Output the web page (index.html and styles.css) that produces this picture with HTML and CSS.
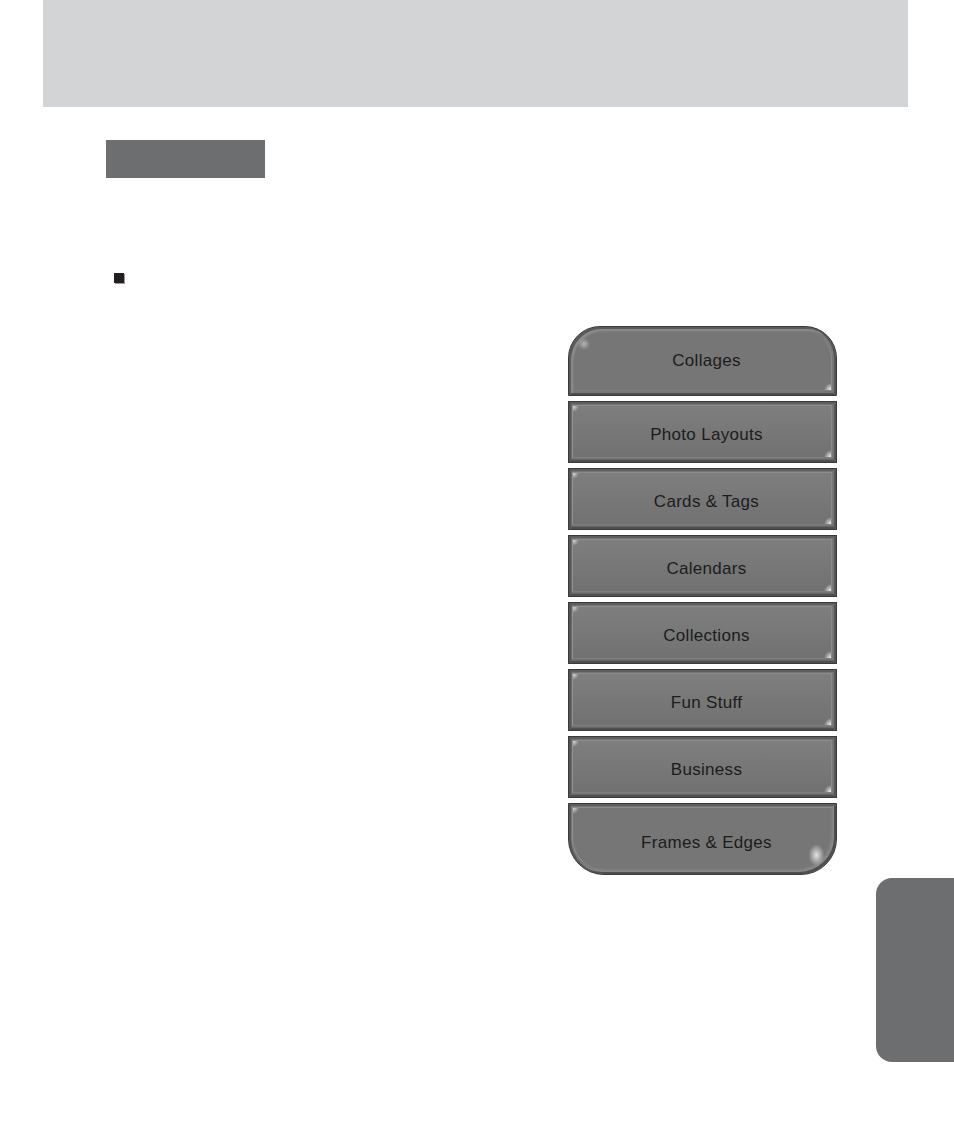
FILE: index.html
```html
<!DOCTYPE html>
<html lang="en">
<head>
<meta charset="utf-8">
<title>Projects</title>
<link rel="stylesheet" href="styles.css">
</head>
<body>
<div class="top-band"></div>
<div class="section-tab"></div>
<div class="bullet"></div>
<nav class="menu">
  <div class="btn btn-first"><span>Collages</span></div>
  <div class="btn"><span>Photo Layouts</span></div>
  <div class="btn"><span>Cards &amp; Tags</span></div>
  <div class="btn"><span>Calendars</span></div>
  <div class="btn"><span>Collections</span></div>
  <div class="btn"><span>Fun Stuff</span></div>
  <div class="btn"><span>Business</span></div>
  <div class="btn btn-last"><span>Frames &amp; Edges</span></div>
</nav>
<div class="side-tab"></div>
</body>
</html>
```
FILE: styles.css
```css
html, body {
  margin: 0;
  padding: 0;
  background: #ffffff;
}
body {
  width: 954px;
  height: 1145px;
  overflow: hidden;
  font-family: "Liberation Sans", Arial, sans-serif;
}
.top-band {
  margin-left: 43px;
  width: 865px;
  height: 107px;
  background: #d3d4d6;
}
.section-tab {
  margin-top: 33px;
  margin-left: 106px;
  width: 159px;
  height: 38px;
  background: #6d6e70;
}
.bullet {
  margin-top: 95px;
  margin-left: 114px;
  width: 10px;
  height: 10px;
  background: #231f20;
  box-shadow: 1px 1px 0 #9a9a9a;
}
.menu {
  margin-top: 43px;
  margin-left: 568px;
  width: 269px;
  display: flex;
  flex-direction: column;
  gap: 5px;
}
.btn {
  position: relative;
  box-sizing: border-box;
  height: 62px;
  border: 1px solid #3a3a3a;
  background: #767676;
  box-shadow:
    inset 2px 0 0 #565656,
    inset 0 2px 0 #5e5e5e,
    inset -2px 0 0 #555555,
    inset 0 -2px 0 #4e4e4e,
    inset 3px 0 1px #6a6a6a,
    inset 0 -3px 1px #666666;
  display: flex;
  align-items: center;
  justify-content: center;
  padding-left: 8px;
  padding-top: 5px;
  color: #1c1c1c;
  font-size: 17px;
  letter-spacing: 0.3px;
}
.btn::before {
  content: "";
  position: absolute;
  left: 3px;
  top: 3px;
  right: 4px;
  bottom: 4px;
  border-top: 1px solid #8c8c8c;
  border-left: 1px solid #939393;
  border-right: 1px solid #8a8a8a;
  border-bottom: 1px solid #7e7e7e;
  background:
    radial-gradient(circle at 0 0, rgba(255,255,255,0.75) 0, rgba(255,255,255,0) 6px) no-repeat,
    radial-gradient(circle at 100% 100%, rgba(255,255,255,0.95) 0, rgba(255,255,255,0) 7px) no-repeat,
    linear-gradient(to bottom, rgba(255,255,255,0.06), rgba(0,0,0,0.04));
  pointer-events: none;
}
.btn span {
  position: relative;
}
.btn-first {
  height: 70px;
  padding-top: 0;
  border-radius: 32px 32px 0 0;
  box-shadow:
    inset 2px 2px 0 #5a5a5a,
    inset -2px 0 0 #555555,
    inset 0 -2px 0 #4e4e4e,
    inset 4px 4px 2px #8d8d8d;
}
.btn-first::before {
  border-top: none;
  border-left: none;
  border-radius: 28px 28px 0 0;
  background:
    radial-gradient(circle at 100% 100%, rgba(255,255,255,0.95) 0, rgba(255,255,255,0) 7px) no-repeat,
    radial-gradient(circle at 12px 14px, rgba(255,255,255,0.45) 0, rgba(255,255,255,0) 6px) no-repeat;
}
.btn-last {
  height: 72px;
  padding-top: 7px;
  border-radius: 0 0 36px 36px;
  box-shadow:
    inset 2px 0 0 #565656,
    inset 0 2px 0 #5e5e5e,
    inset -2px -2px 0 #4e4e4e,
    inset -4px -4px 3px #8a8a8a;
}
.btn-last::before {
  border-right: none;
  border-bottom: none;
  border-radius: 0 0 32px 32px;
  background:
    radial-gradient(circle at 0 0, rgba(255,255,255,0.75) 0, rgba(255,255,255,0) 6px) no-repeat,
    radial-gradient(8px 11px at 94% 76%, rgba(255,255,255,0.8) 0, rgba(255,255,255,0) 100%) no-repeat;
}
.side-tab {
  margin-top: 3px;
  margin-left: 876px;
  width: 78px;
  height: 184px;
  background: #6d6e70;
  border-radius: 16px 0 0 16px;
}
```
